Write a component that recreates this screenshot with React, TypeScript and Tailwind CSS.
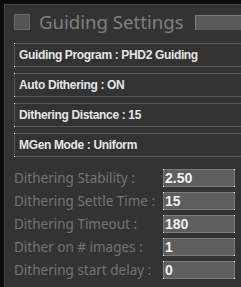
import React from 'react';

const modes = [
  'Guiding Program : PHD2 Guiding',
  'Auto Dithering : ON',
  'Dithering Distance : 15',
  'MGen Mode : Uniform',
];

const fields = [
  { label: 'Dithering Stability :', value: '2.50' },
  { label: 'Dithering Settle Time :', value: '15' },
  { label: 'Dithering Timeout :', value: '180' },
  { label: 'Dither on # images :', value: '1' },
  { label: 'Dithering start delay :', value: '0' },
];

function Dot({ className }: { className: string }) {
  return <span className={`absolute w-px h-px bg-white ${className}`} />;
}

export default function App() {
  return (
    <div className="w-[241px] h-[287px] overflow-hidden bg-[#0c0c0c] pl-[4px] pt-[4px]">
      <div className="h-full bg-[#333333] border-l border-t border-[#474747] pl-[9px] pt-[9px]">
        <div className="flex items-center h-[16px]">
          <div className="w-[16px] h-[16px] shrink-0 bg-[#555555] border border-[#6a6a6a] rounded-[1px]" />
          <span className="ml-[9px] text-[18.6px] leading-none text-[#808080] whitespace-nowrap [font-family:'Noto_Sans',sans-serif]">
            Guiding Settings
          </span>
          <div className="ml-[11px] h-[15px] flex-1 bg-[#5a5a5a] border-l border-t border-[#7a7a7a]" />
        </div>

        <div className="mt-[13px] flex flex-col gap-[6px]">
          {modes.map((m) => (
            <div
              key={m}
              className="relative h-[24px] flex items-center pl-[4px] border-l border-t border-b border-[#555555] text-[12px] tracking-[-0.35px] font-bold text-[#e6e6e6] whitespace-nowrap [font-family:'Liberation_Sans',Arial,sans-serif]"
            >
              <Dot className="-left-px -top-px" />
              <Dot className="-left-px -bottom-px" />
              {m}
            </div>
          ))}
        </div>

        <div className="mt-[12px] flex flex-col gap-[5px]">
          {fields.map((f) => (
            <div key={f.label} className="flex items-center h-[18px]">
              <span className="w-[149px] text-[13.5px] text-[#737373] whitespace-nowrap [font-family:'Noto_Sans',sans-serif]">
                {f.label}
              </span>
              <div className="relative w-[72px] h-[18px] bg-[#5e5e5e] border border-[#7c7c7c] flex items-center pl-[1px] text-[14px] font-bold text-[#f0f0f0] [font-family:'Liberation_Sans',Arial,sans-serif]">
                <Dot className="-left-px -top-px" />
                <Dot className="-right-px -top-px" />
                <Dot className="-left-px -bottom-px" />
                <Dot className="-right-px -bottom-px" />
                {f.value}
              </div>
            </div>
          ))}
        </div>
      </div>
    </div>
  );
}
